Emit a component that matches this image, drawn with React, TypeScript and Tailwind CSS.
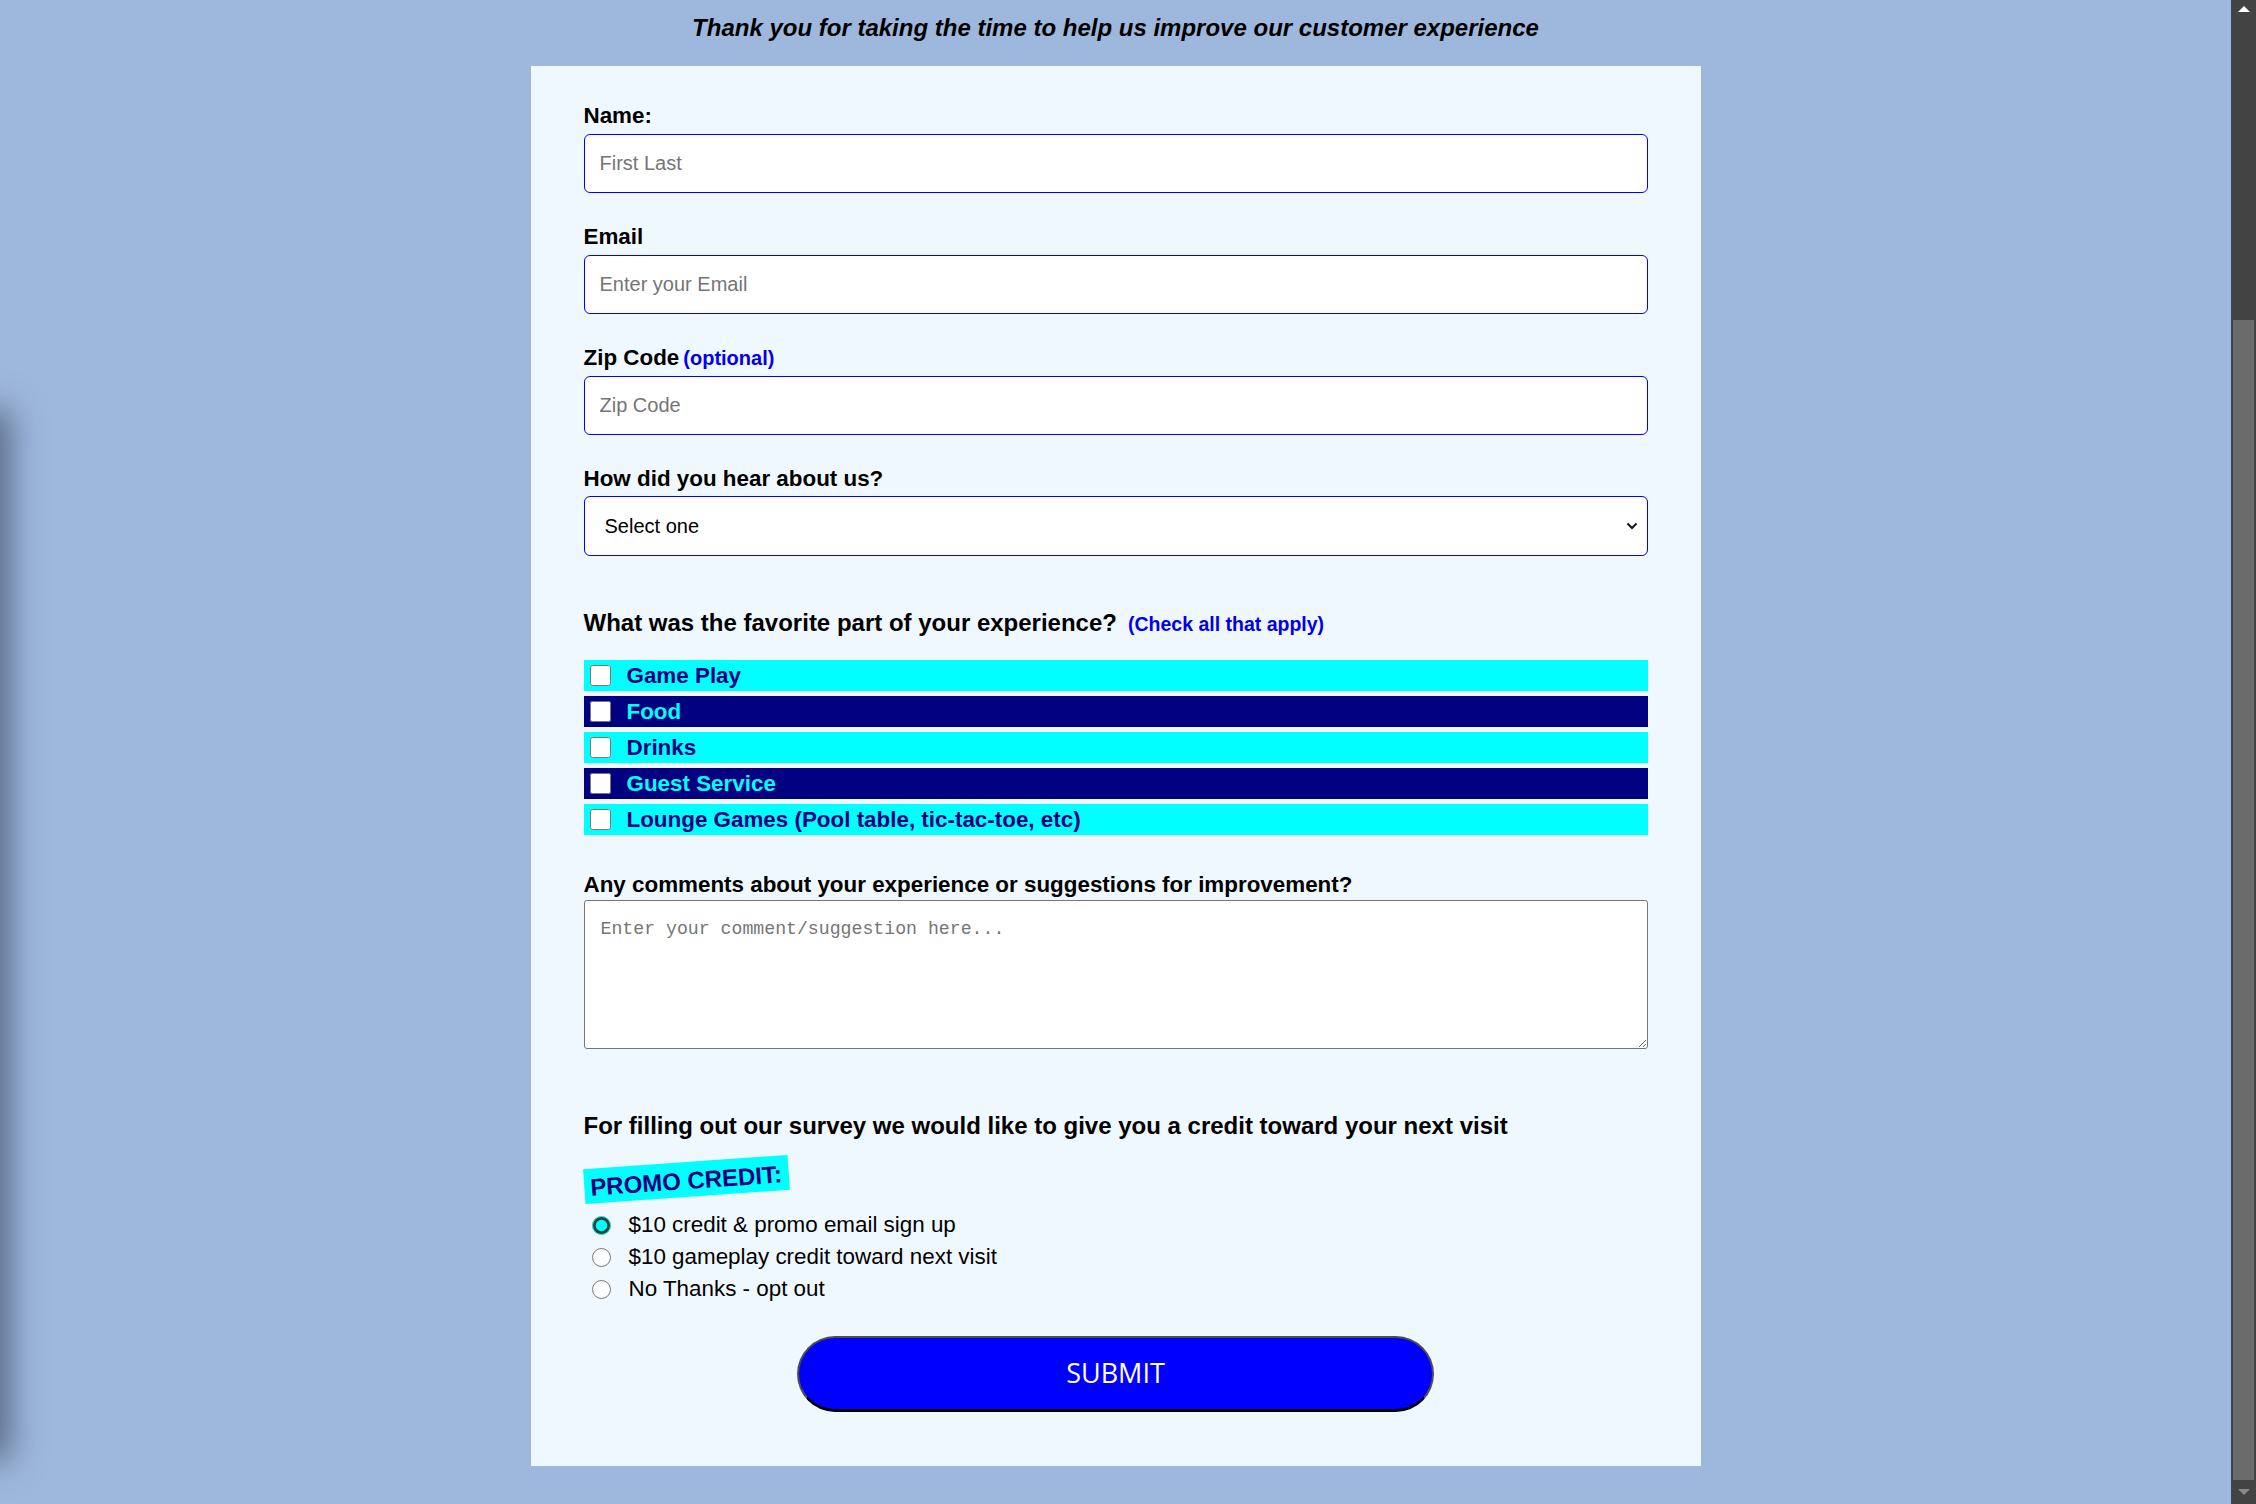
import { useState } from "react";

const sans = "font-['Liberation_Sans',Arial,sans-serif]";

const favorites = [
  { label: "Game Play", dark: false },
  { label: "Food", dark: true },
  { label: "Drinks", dark: false },
  { label: "Guest Service", dark: true },
  { label: "Lounge Games (Pool table, tic-tac-toe, etc)", dark: false },
];

const credits = [
  "$10 credit & promo email sign up",
  "$10 gameplay credit toward next visit",
  "No Thanks - opt out",
];

const Field = ({
  label,
  placeholder,
  extra,
}: {
  label: string;
  placeholder: string;
  extra?: string;
}) => (
  <div className="mb-[31px] flex flex-col gap-[6px]">
    <label className="flex h-[25px] items-baseline text-[22.4px] font-bold leading-[25px] text-black">
      {label}
      {extra && <span className="ml-[4px] text-[20px] leading-none text-[#0000ee]">{extra}</span>}
    </label>
    <input
      type="text"
      placeholder={placeholder}
      className="h-[59px] w-full rounded-[6px] border border-[#0000ff] bg-white pl-[15px] text-[20px] text-black outline-none placeholder:text-[#757575]"
    />
  </div>
);

export default function App() {
  const [credit, setCredit] = useState(0);

  return (
    <div className={`relative flex h-screen w-full overflow-hidden bg-[#9eb8dd] ${sans}`}>
      {/* shadow from an off-screen drawer */}
      <div className="absolute top-[420px] left-[-40px] h-[1030px] w-[40px] shadow-[0_0_34px_10px_rgba(40,50,70,0.6)]" />

      <main className="flex flex-1 flex-col items-center pt-[14px]">
        <h2 className="text-[24px] font-bold italic leading-[28px] text-black">
          Thank you for taking the time to help us improve our customer experience
        </h2>

        <form
          onSubmit={(e) => e.preventDefault()}
          className="mt-[24px] flex w-[1170px] flex-col bg-[#f0f8ff] px-[53px] pt-[37px] pb-[54px]"
        >
          <Field label="Name:" placeholder="First Last" />
          <Field label="Email" placeholder="Enter your Email" />
          <Field label="Zip Code" placeholder="Zip Code" extra="(optional)" />

          <div className="flex flex-col gap-[5px]">
            <label className="text-[22.4px] font-bold leading-[25px] text-black">
              How did you hear about us?
            </label>
            <div className="relative">
              <select className="h-[60px] w-full appearance-none rounded-[6px] border border-[#0000ff] bg-white pl-[20px] text-[20px] text-black outline-none">
                <option>Select one</option>
                <option>Social media</option>
                <option>Friend or family</option>
                <option>Search engine</option>
                <option>Other</option>
              </select>
              <svg
                viewBox="0 0 12 8"
                className="pointer-events-none absolute top-1/2 right-[10px] h-[8px] w-[12px] -translate-y-1/2"
                fill="none"
              >
                <path d="M1.5 1.5L6 6l4.5-4.5" stroke="#111" strokeWidth="2" />
              </svg>
            </div>
          </div>

          <div className="mt-[53px] flex h-[28px] items-baseline gap-[11px]">
            <span className="text-[24px] font-bold leading-[28px] text-black">
              What was the favorite part of your experience?
            </span>
            <span className="text-[19.5px] font-bold leading-none text-[#0000ee]">(Check all that apply)</span>
          </div>

          <div className="mt-[23px] flex flex-col gap-[5px]">
            {favorites.map((f) => (
              <label
                key={f.label}
                className={[
                  "flex h-[31px] items-center gap-[16px] pl-[6px] text-[22.4px] font-bold",
                  f.dark ? "bg-[#000080] text-[#00ffff]" : "bg-[#00ffff] text-[#000080]",
                ].join(" ")}
              >
                <input type="checkbox" className="m-0 h-[21px] w-[21px]" />
                <span>{f.label}</span>
              </label>
            ))}
          </div>

          <label className="mt-[37px] text-[22.4px] font-bold leading-[25px] text-black">
            Any comments about your experience or suggestions for improvement?
          </label>
          <textarea
            placeholder="Enter your comment/suggestion here..."
            className="mt-[3px] h-[149px] w-full rounded-[3px] border border-[#767676] bg-white px-[16px] pt-[15px] font-['Liberation_Mono',monospace] text-[18.2px] text-black outline-none placeholder:text-[#757575]"
          />

          <p className="mt-[63px] text-[24px] font-bold leading-[28px] text-black">
            For filling out our survey we would like to give you a credit toward your next visit
          </p>

          <div className="mt-[22px] flex">
            <span className="flex h-[35px] w-[205px] origin-center -rotate-[4deg] items-center bg-[#00ffff] pt-[3px] pl-[6px] text-[24px] font-bold text-[#000080]">
              PROMO CREDIT:
            </span>
          </div>

          <div className="mt-[12px] flex flex-col">
            {credits.map((c, i) => (
              <label key={c} className="flex h-[32px] items-center gap-[18px] pl-[8px] text-[22.4px] text-black">
                <input
                  type="radio"
                  name="credit"
                  checked={credit === i}
                  onChange={() => setCredit(i)}
                  className="m-0 h-[19px] w-[19px] accent-[#00ffff]"
                />
                <span>{c}</span>
              </label>
            ))}
          </div>

          <div className="mt-[31px] flex justify-center">
            <button
              type="submit"
              className="h-[76px] w-[637px] rounded-full border-2 border-[#4d4d4d] border-b-[3px] border-b-black bg-[#0000ff] font-['Open_Sans',sans-serif] text-[27px] text-white"
            >
              SUBMIT
            </button>
          </div>
        </form>
      </main>

      {/* scrollbar */}
      <div className="flex w-[25px] flex-col items-center bg-[#434343]">
        <div className="flex h-[17px] w-full items-center justify-center">
          <span className="h-0 w-0 border-x-[6px] border-b-[6px] border-x-transparent border-b-white" />
        </div>
        <div className="mt-[303px] h-[1160px] w-[21px] bg-[#6b6b6b]" />
        <div className="flex flex-1 items-center justify-center">
          <span className="h-0 w-0 border-x-[6px] border-t-[6px] border-x-transparent border-t-[#8a8a8a]" />
        </div>
      </div>
    </div>
  );
}
